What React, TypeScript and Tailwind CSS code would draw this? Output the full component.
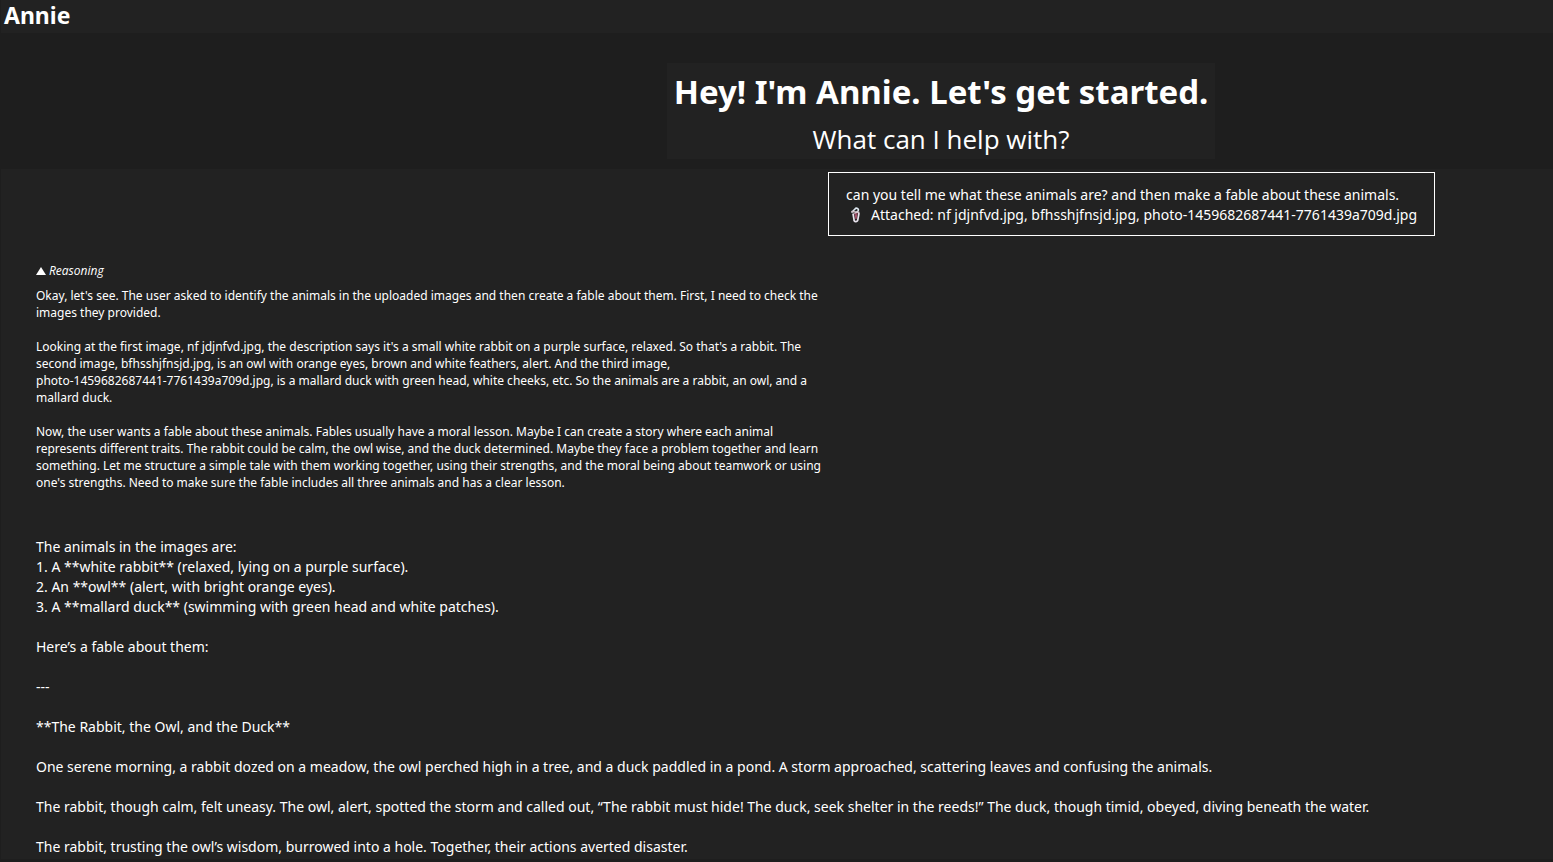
import React, { useState } from "react";

interface MessageI {
    text: string;
    files: string[];
}

const question: MessageI = {
    text: "can you tell me what these animals are? and then make a fable about these animals.",
    files: ["nf jdjnfvd.jpg", "bfhsshjfnsjd.jpg", "photo-1459682687441-7761439a709d.jpg"],
};

const reasoning: string[] = [
    "Okay, let's see. The user asked to identify the animals in the uploaded images and then create a fable about them. First, I need to check the\nimages they provided.",
    "Looking at the first image, nf jdjnfvd.jpg, the description says it's a small white rabbit on a purple surface, relaxed. So that's a rabbit. The\nsecond image, bfhsshjfnsjd.jpg, is an owl with orange eyes, brown and white feathers, alert. And the third image,\nphoto-1459682687441-7761439a709d.jpg, is a mallard duck with green head, white cheeks, etc. So the animals are a rabbit, an owl, and a\nmallard duck.",
    "Now, the user wants a fable about these animals. Fables usually have a moral lesson. Maybe I can create a story where each animal\nrepresents different traits. The rabbit could be calm, the owl wise, and the duck determined. Maybe they face a problem together and learn\nsomething. Let me structure a simple tale with them working together, using their strengths, and the moral being about teamwork or using\none's strengths. Need to make sure the fable includes all three animals and has a clear lesson.",
];

const answer: string[] = [
    "The animals in the images are:\n1. A **white rabbit** (relaxed, lying on a purple surface).\n2. An **owl** (alert, with bright orange eyes).\n3. A **mallard duck** (swimming with green head and white patches).",
    "Here’s a fable about them:",
    "---",
    "**The Rabbit, the Owl, and the Duck**",
    "One serene morning, a rabbit dozed on a meadow, the owl perched high in a tree, and a duck paddled in a pond. A storm approached, scattering leaves and confusing the animals.",
    "The rabbit, though calm, felt uneasy. The owl, alert, spotted the storm and called out, “The rabbit must hide! The duck, seek shelter in the reeds!” The duck, though timid, obeyed, diving beneath the water.",
    "The rabbit, trusting the owl’s wisdom, burrowed into a hole. Together, their actions averted disaster.",
];

function PaperclipsIcon() {
    return (
        <svg viewBox="0 0 13 16" className="h-4 w-[13px] shrink-0" fill="none" aria-hidden="true">
            <path d="M1.5 5.5 5 2a1.8 1.8 0 0 1 3 2L4.5 7" stroke="#dfe9f2" strokeWidth="1.6" />
            <path d="M1.5 4.5 9.5 5.5" stroke="#d5c3cb" strokeWidth="1.4" />
            <path d="M3 6.5 4 12.6a1.9 1.9 0 0 0 3.8.3L9 6" stroke="#e9e4ee" strokeWidth="1.7" />
            <path d="M5 6 6 12 7 6" stroke="#a8506a" strokeWidth="1.2" />
        </svg>
    );
}

function Welcome() {
    return (
        <div className="flex justify-center pt-[30px] pb-2.5 pl-[328px]">
            <div className="bg-[#222222] px-[7px] pb-px text-center text-white">
                <h1 className="text-[33px] leading-[57px] font-bold">Hey! I'm Annie. Let's get started.</h1>
                <p className="font-['Open_Sans',sans-serif] text-[26px] leading-[38px]">What can I help with?</p>
            </div>
        </div>
    );
}

function UserMessage({ text, files }: MessageI) {
    return (
        <div className="mr-[118px] self-end border border-white px-[17px] pt-3 pb-2.5 text-sm leading-5">
            <p>{text}</p>
            <p className="flex items-center gap-2 pl-1">
                <PaperclipsIcon />
                <span>Attached: {files.join(", ")}</span>
            </p>
        </div>
    );
}

function Reasoning() {
    const [open, setOpen] = useState<boolean>(true);
    return (
        <div className="mt-[26px] text-xs leading-[17px]">
            <button onClick={() => setOpen(!open)} className="flex items-center gap-[3px] font-['Open_Sans',sans-serif] italic">
                <svg viewBox="0 0 10 8" className={open ? "h-2 w-2.5" : "h-2 w-2.5 rotate-180"} aria-hidden="true">
                    <path d="M5 0 10 8H0z" fill="currentColor" />
                </svg>
                Reasoning
            </button>
            {open && (
                <div className="mt-2 flex flex-col gap-[17px]">
                    {reasoning.map((element, index) => (
                        <p key={index} className="whitespace-pre-line">{element}</p>
                    ))}
                </div>
            )}
        </div>
    );
}

export default function App() {
    return (
        <div className="flex min-h-screen flex-col bg-[#1e1e1e] pl-px font-['Noto_Sans',sans-serif] text-white">
            <header className="bg-[#222222] px-[3px] pb-[3px]">
                <span className="block text-[23px] leading-[30px] font-bold">Annie</span>
            </header>
            <Welcome />
            <main className="flex flex-col bg-[#222222] pt-[3px] pb-0.5">
                <UserMessage text={question.text} files={question.files} />
                <div className="px-[35px]">
                    <Reasoning />
                    <div className="mt-[46px] flex flex-col gap-5 text-sm leading-5">
                        {answer.map((element, index) => (
                            <p key={index} className="whitespace-pre-line">{element}</p>
                        ))}
                    </div>
                </div>
            </main>
        </div>
    );
}
